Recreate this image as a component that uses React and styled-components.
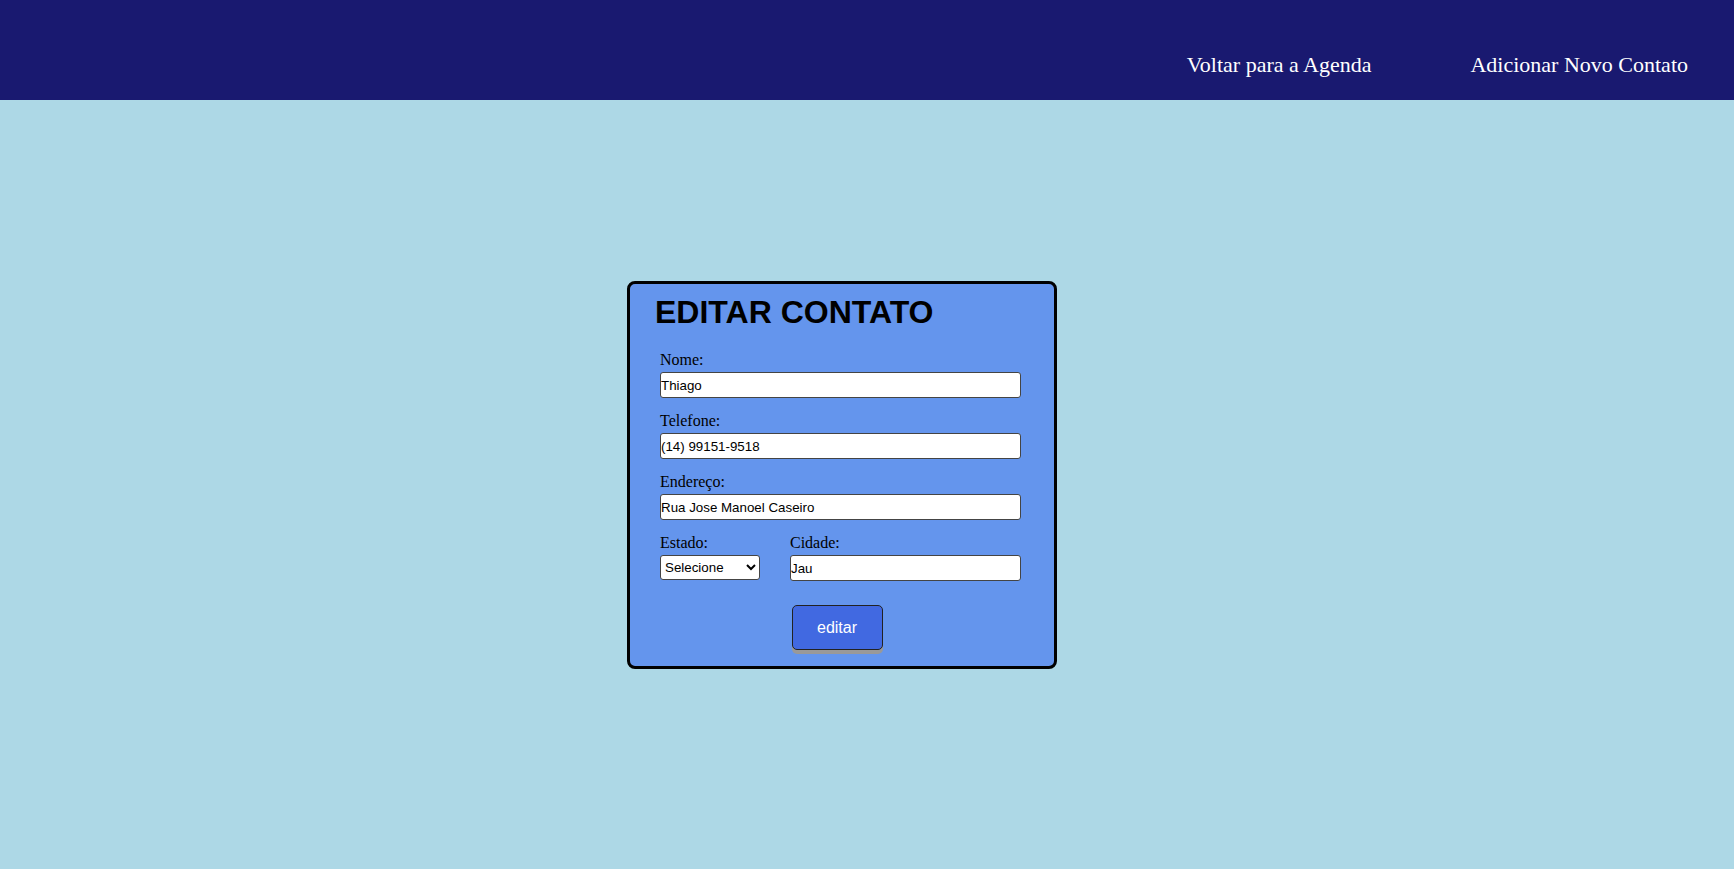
import React from 'react';
import styled, { createGlobalStyle } from 'styled-components';

const GlobalStyle = createGlobalStyle`
  body {
    margin: 0;
    background-color: #add8e6;
    font-family: "Liberation Serif", "Times New Roman", serif;
  }
`;

const Header = styled.header`
  height: 100px;
  background-color: #191970;
  display: flex;
  justify-content: flex-end;
  align-items: flex-start;
  gap: 99px;
  padding: 52px 46px 0 0;
  box-sizing: border-box;
`;

const NavLink = styled.a`
  color: #fff;
  font-size: 22px;
  line-height: 26px;
  text-decoration: none;
  cursor: pointer;
`;

const Main = styled.main`
  display: flex;
  justify-content: center;
  padding: 181px 50px 0 0;
`;

const Card = styled.form`
  width: 430px;
  box-sizing: border-box;
  background-color: #6495ed;
  border: 3px solid #000;
  border-radius: 8px;
  padding: 10px 33px 16px 30px;
  display: flex;
  flex-direction: column;
`;

const Title = styled.h1`
  margin: 0 0 19px -5px;
  font-family: "Liberation Sans", Arial, sans-serif;
  font-size: 32px;
  line-height: 37px;
  font-weight: bold;
  color: #000;
`;

const Field = styled.div`
  display: flex;
  flex-direction: column;
  margin-bottom: 13px;
  width: ${props => props.width || 'auto'};
  flex: ${props => props.grow ? 1 : 'none'};
`;

const Label = styled.label`
  font-size: 16px;
  line-height: 19px;
  color: #000;
  margin-bottom: 3px;
`;

const Input = styled.input`
  height: 26px;
  box-sizing: border-box;
  border: 1px solid #444;
  border-radius: 3px;
  padding: 0;
  font-family: "Liberation Sans", Arial, sans-serif;
  font-size: 13.33px;
  color: #000;
  background: #fff;
`;

const Select = styled.select`
  width: 100px;
  height: 25px;
  box-sizing: border-box;
  border: 1px solid #444;
  border-radius: 3px;
  font-family: "Liberation Sans", Arial, sans-serif;
  font-size: 13.33px;
  color: #000;
  background: #fff;
`;

const Row = styled.div`
  display: flex;
`;

const Button = styled.button`
  align-self: center;
  margin: 11px 7px 0 0;
  width: 91px;
  height: 45px;
  background-color: #4169e1;
  color: #fff;
  border: 1px solid #222;
  border-radius: 5px;
  box-shadow: 0 4px 0 #999;
  font-family: "Liberation Sans", Arial, sans-serif;
  font-size: 16px;
  cursor: pointer;
`;

export default function App() {
  return (
    <>
      <GlobalStyle />
      <Header>
        <NavLink>Voltar para a Agenda</NavLink>
        <NavLink>Adicionar Novo Contato</NavLink>
      </Header>
      <Main>
        <Card onSubmit={e => e.preventDefault()}>
          <Title>EDITAR CONTATO</Title>
          <Field>
            <Label>Nome:</Label>
            <Input defaultValue="Thiago" />
          </Field>
          <Field>
            <Label>Telefone:</Label>
            <Input defaultValue="(14) 99151-9518" />
          </Field>
          <Field>
            <Label>Endereço:</Label>
            <Input defaultValue="Rua Jose Manoel Caseiro" />
          </Field>
          <Row>
            <Field width="130px">
              <Label>Estado:</Label>
              <Select defaultValue="">
                <option value="">Selecione</option>
                <option value="SP">SP</option>
                <option value="RJ">RJ</option>
                <option value="MG">MG</option>
              </Select>
            </Field>
            <Field grow>
              <Label>Cidade:</Label>
              <Input defaultValue="Jau" />
            </Field>
          </Row>
          <Button type="submit">editar</Button>
        </Card>
      </Main>
    </>
  );
}
